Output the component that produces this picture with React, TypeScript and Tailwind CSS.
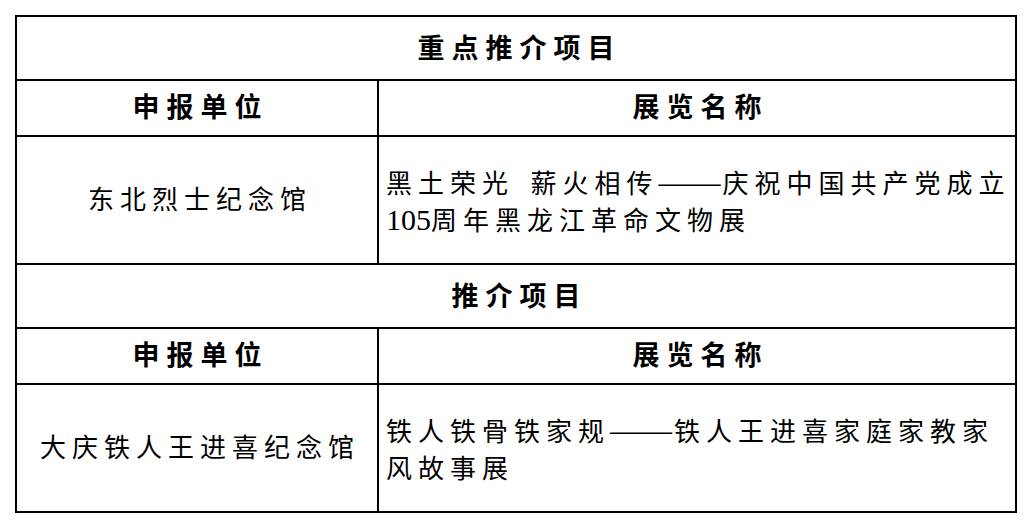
const font = "font-['Liberation_Serif','Noto_Sans_CJK_SC',serif]";

function Dash() {
  return <span className="text-[31px] leading-none tracking-[0px] mr-[2px]">——</span>;
}

function SectionTitle({ title }: { title: string }) {
  return (
    <tr>
      <td colSpan={2} className="h-[64px] border-2 border-black text-center align-middle text-[27px] font-semibold tracking-[7px] pl-[7px] pt-[2px]">
        {title}
      </td>
    </tr>
  );
}

function HeaderRow() {
  return (
    <tr>
      <td className="h-[56px] border-2 border-black text-center align-middle text-[27px] font-semibold tracking-[7px] pl-[7px]">
        申报单位
      </td>
      <td className="h-[56px] border-2 border-black text-center align-middle text-[27px] font-semibold tracking-[7px] pl-[7px]">
        展览名称
      </td>
    </tr>
  );
}

function DataRow({ unit, children }: { unit: string; children: React.ReactNode }) {
  return (
    <tr>
      <td className="h-[128px] border-2 border-black text-center align-middle text-[26px] tracking-[6px] pl-[6px]">
        {unit}
      </td>
      <td className="h-[128px] border-2 border-black align-middle text-[26px] leading-[37px] tracking-[6px] pl-[7px] pr-0 pt-[5px]">
        {children}
      </td>
    </tr>
  );
}

export default function App() {
  return (
    <div className={`min-h-screen w-[1032px] bg-white pt-[15px] pl-[15px] text-black ${font}`}>
      <table className="w-[1002px] table-fixed border-collapse border-2 border-black">
        <colgroup>
          <col className="w-[362px]" />
          <col />
        </colgroup>
        <tbody>
          <SectionTitle title="重点推介项目" />
          <HeaderRow />
          <DataRow unit="东北烈士纪念馆">
            黑土荣光<span className="tracking-[10px]"> </span>薪火相传<Dash />庆祝中国共产党成立
            <span className="text-[30px] leading-none tracking-[0px]">105</span>周年黑龙江革命文物展
          </DataRow>
          <SectionTitle title="推介项目" />
          <HeaderRow />
          <DataRow unit="大庆铁人王进喜纪念馆">
            铁人铁骨铁家规<Dash />铁人王进喜家庭家教家风故事展
          </DataRow>
        </tbody>
      </table>
    </div>
  );
}
